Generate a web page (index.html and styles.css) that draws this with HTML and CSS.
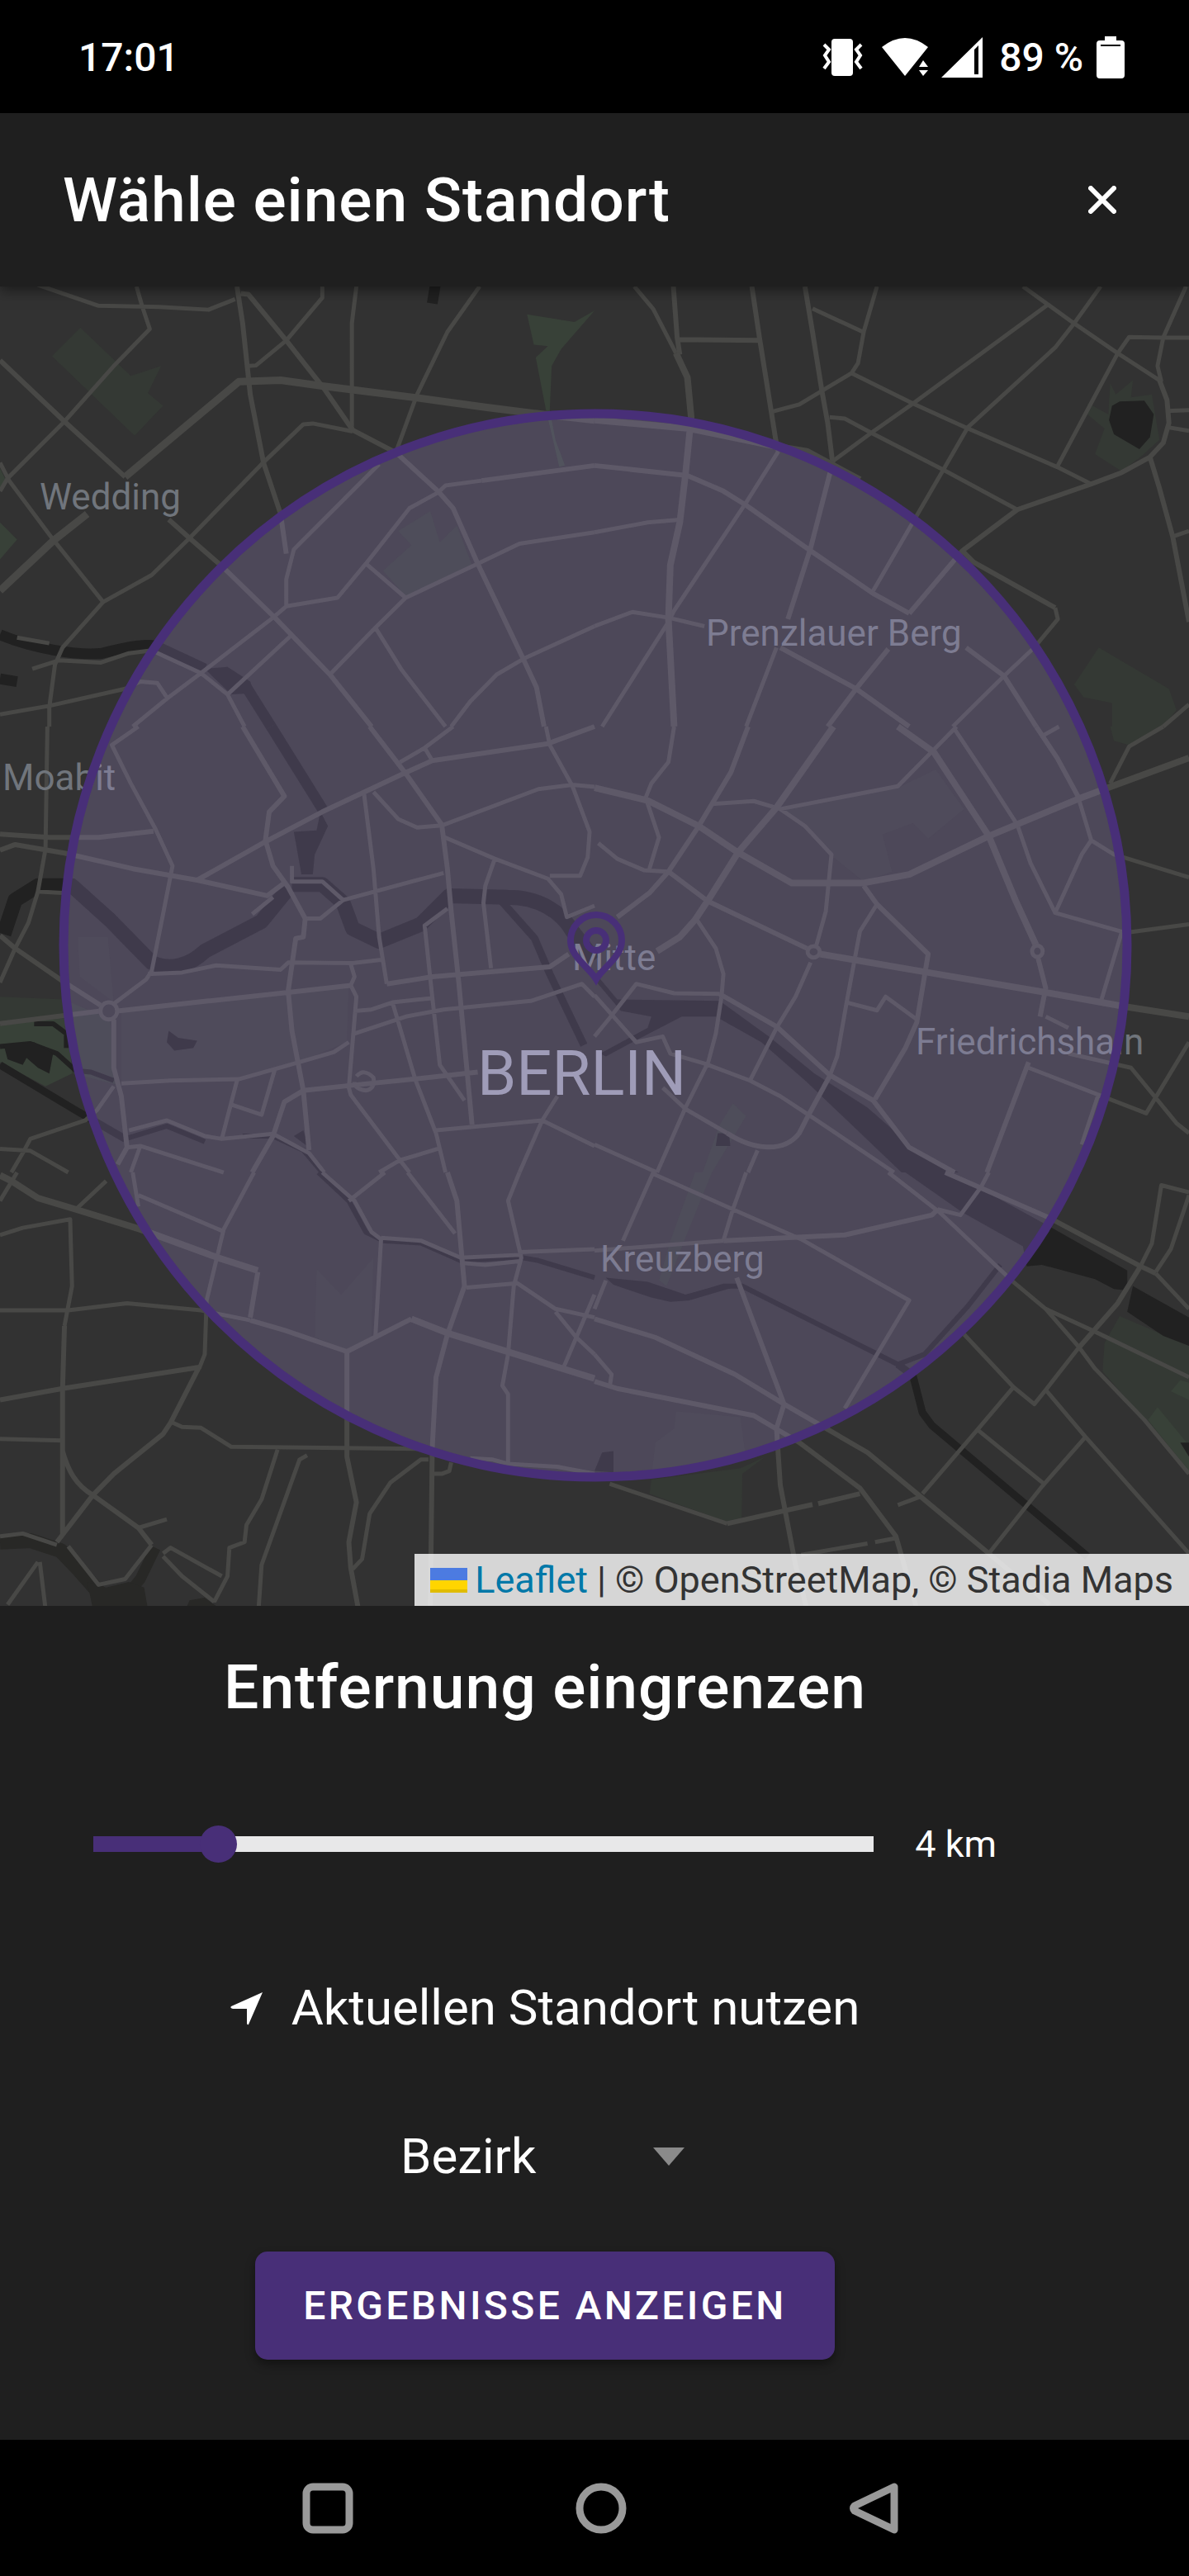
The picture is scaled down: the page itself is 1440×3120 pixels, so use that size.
FILE: index.html
```html
<!DOCTYPE html>
<html lang="de">
<head>
<meta charset="utf-8">
<meta name="viewport" content="width=device-width, initial-scale=1">
<title>Wähle einen Standort</title>
<link rel="stylesheet" href="styles.css">
</head>
<body>
<div class="status-bar">
  <time class="clock">17:01</time>
  <div class="status-icons">
    <svg class="vibrate" viewBox="0 0 50 46" width="50" height="46" aria-hidden="true"><rect x="11" width="26" height="45" rx="4" fill="#fff"/><path d="M2 7l6 6-5 7 5 8-6 8M47 7l-6 6 5 7-5 8 6 8" fill="none" stroke="#fff" stroke-width="4"/></svg>
    <svg class="wifi" viewBox="0 0 57 47" width="57" height="47" aria-hidden="true"><path d="M0 11Q28-11 56 11L28 46zM45 35l5-8 6 8zM45 39h11l-6 7z" fill="#fff"/></svg>
    <svg class="signal" viewBox="0 0 50 50" width="50" height="50" aria-hidden="true"><path fill-rule="evenodd" d="M0 49L50 0v49zM40 15v30h5V10z" fill="#fff"/></svg>
    <span class="charge">89 %</span>
    <svg class="battery" viewBox="0 0 34 51" width="34" height="51" aria-hidden="true"><path fill-rule="evenodd" d="M10 0h14v5h6a4 4 0 0 1 4 4v38a4 4 0 0 1-4 4H4a4 4 0 0 1-4-4V9a4 4 0 0 1 4-4h6zM5 10v2h24v-2z" fill="#fff"/></svg>
  </div>
</div>

<header class="title-bar">
  <h1 class="title">Wähle einen Standort</h1>
  <button class="close" type="button" aria-label="Schließen"><svg viewBox="0 0 34 34" width="34" height="34"><path d="M3 3l28 28M31 3L3 31" stroke="#fff" stroke-width="6" stroke-linecap="round"/></svg></button>
</header>

<main class="content">
<section class="map" aria-label="Karte">
<svg class="map-canvas" viewBox="0 347 1440 1598" preserveAspectRatio="xMidYMid slice">
<!-- one group per map tile: parks, water, roads -->
<g transform="translate(0 340) scale(.4592 .3444)">
  <path class="park" d="M212 165L345 335 425 300 390 395 430 440 355 545 137 265zM1135 810L1160 920 1205 860 1245 1000 1070 1110 1010 1020 1085 930 1050 880z"/>
  <path class="park-strong" d="M1390 118L1515 145 1568 105 1480 240 1455 300 1450 455 1465 560 1490 650 1475 655 1440 455 1413 270 1445 230 1408 225zM0 660L15 700 0 740zM0 850L45 910 0 980z"/>
  <path class="canal w12" d="M0 1245C80 1290 200 1320 270 1310 330 1290 400 1270 420 1290L540 1365M0 1400L45 1410M1148 15L1140 80M650 1430L715 1568"/>
  <path class="water" d="M540 1365L600 1358 660 1410 670 1450 610 1455z"/>
  <path class="road" d="M100 15L260 88 420 92 550 102 620 65M360 20L375 90 395 170 300 300 170 495 20 695 0 740M0 640L25 705 140 910 272 1130M850 20V60L755 210 675 298 655 300M940 20L928 150V530M1265 20L1180 180 1100 400 1045 600M272 1130L400 1035 500 905 690 645 800 505 825 502 930 530M272 1130L165 1290 145 1350 130 1500V1568M1000 645L775 945 755 1050V1145L720 1185 530 1380 440 1470 350 1568M755 1145L890 1115 965 995 1080 800 1155 745 1175 720 1270 703M965 995L1070 1115 1260 995 1370 925 1568 885M1070 1115L990 1220 870 1385M990 1220L1060 1370 1175 1568M770 1245L600 1455M1568 1215L1380 1330 1310 1385 1240 1480 1190 1568M85 1365L155 1335 265 1343 340 1310 400 1300 530 1380 600 1455 645 1568M0 1525L130 1495 330 1435 370 1410 415 1415 440 1465M45 1255L130 1275"/>
  <path class="road w6" d="M0 280L170 495 330 690M625 20L640 150 660 400 695 640 740 820 755 960M635 45L655 48 755 210 855 380 930 525 1045 605 1155 740 1195 800 1260 995 1380 1330 1415 1430 1435 1568M445 840L500 905 590 1010 725 1185 870 1385 980 1568M1270 703L1568 650"/>
  <path class="road w9" d="M0 1090L140 915 230 820M330 690L630 355 740 350 850 370 1100 412 1280 445 1400 465 1568 490"/>
</g>
<g transform="translate(720 340) scale(.4592 .3444)">
  <path class="park" d="M1300 430L1355 470 1360 360 1375 400 1420 350 1415 410 1470 400 1490 560 1440 620 1390 670 1320 610 1345 520 1300 470zM1330 1290L1515 1435 1535 1510 1500 1568H1365V1485L1290 1465 1265 1420z"/>
  <path class="water" d="M1365 440L1385 425 1450 422 1475 470 1465 550 1437 592 1370 540 1357 490z"/>
  <path class="road" d="M105 20L155 100 215 255M575 98L708 180M745 20L710 180 695 290 678 325 540 435 470 460M678 325L840 432 985 520 1220 655 1310 715M620 480L660 485 730 535 920 665 1115 805M1195 85L840 432 730 535 628 635M1130 20L1265 150 1380 255 1490 350M1335 20L1265 150 1215 235 985 515 920 665 835 860 735 1090M1560 20L1500 200 1485 300 1495 355M1568 200H1500L1410 198 1380 255 1220 655M1510 458L1568 455M1510 515L1568 528M1525 900L1568 880M1215 1150L1222 1190 1160 1290 1080 1390 945 1568M0 885L140 850 230 840M0 1215L100 1165 195 1185 290 1215M480 1290L400 1568M1568 1490L1500 1568M485 600L400 780 210 1160 195 1200 20 1568"/>
  <path class="road w6" d="M208 20L218 200 225 260M215 207L435 210M415 20L435 200 465 450 478 560 485 600M555 20L575 180 600 390 615 500 628 640 570 940 510 1190M1490 350L1510 420 1515 500 1500 570 1465 620 1390 675 1310 715 1115 805 970 950 830 1170M1465 620L1490 730 1525 900 1568 1200M970 950L1000 990 1215 1150M0 650L245 685 340 740 400 790 565 945 735 1100 830 1170M980 1290L1080 1390 1165 1568M490 1290L690 1435 830 1568M775 1295L690 1435 615 1568"/>
  <path class="road w8" d="M215 255L245 340 255 480 240 680 225 850 200 1000 195 1190 210 1568M0 490L250 520 470 580 560 600 700 700"/>
</g>
<g transform="translate(0 880) scale(.4592 .3444)">
  <path class="park" d="M0 950L170 960 290 1030 0 1045zM180 1025L290 1030 310 1260 190 1220z"/>
  <path class="park-strong" d="M0 1050L180 1025 190 1220 120 1265 0 1180z"/>
  <path class="lawn" d="M205 740L285 740 300 970 210 880zM320 1005L920 915 915 1110 790 1180 620 1240 320 1250z"/>
  <path class="canal w18" d="M10 730L40 610 100 560H190L290 680 400 830C450 860 500 840 540 790L690 685 760 570M770 555H850L905 620 930 710 1000 755 1110 695 1185 595 1340 600C1420 600 1480 650 1510 720L1568 820"/>
  <path class="canal w12" d="M715 0L855 300"/>
  <path class="canal w9" d="M1320 610L1410 745 1450 870 1540 1120M0 1190L200 1350 330 1450"/>
  <path class="canal w6" d="M330 1450L440 1405 540 1460M90 1045L140 1045 175 1080V1130M0 1125L80 1115 150 1150 200 1210 240 1215 300 1245M640 1440L720 1440 800 1490 850 1568"/>
  <path class="water" d="M845 300L865 350 830 450 825 520H795L775 370 835 365zM445 1070L470 1095 520 1105 510 1130 460 1140 440 1110zM10 1120L90 1110 140 1150 130 1220 100 1200 70 1165 60 1190 20 1170zM775 1440L800 1420 815 1480z"/>
  <path class="road" d="M125 0L120 430 100 580 75 690 40 780 0 900M365 0L295 65 345 200 410 360 455 490 430 660 400 860 385 890 300 975M95 580L165 585M1195 0L1120 75 1055 125M1120 75L1140 120M960 235L985 500 1000 740 1020 905M985 230L1050 325 1100 355 1165 348 1420 220 1510 205 1568 212M1440 0L1450 65 1510 210 1555 370 1550 460 1530 525H1450M1165 385L1305 465 1445 535 1480 590 1495 670 1568 630M1305 465L1280 560 1275 620 1295 850M665 660L720 600M770 490V545H850L905 610 1170 515M905 610L845 675H805M390 870L480 865 570 840 740 855 760 830 930 832 1005 820M925 835L935 880 925 910 940 950 920 1270 925 1295 1055 1525 1080 1568M1180 640L1120 700 1140 950 1160 1190 1225 1315M935 1000L980 995 1035 970 1140 955M935 1080L1070 1020 1170 995 1400 965 1535 905 1568 950M1035 970L1095 1240 1150 1430 1175 1568M320 1255L450 1245 630 1240 790 1180 880 1145 920 1110M300 1265L255 1350 225 1385 80 1450 60 1500 30 1568M0 1485L80 1492 130 1530 180 1568M625 1245L585 1450M725 1205L690 1365 612 1330M340 1420L440 1385 540 1440 585 1450 720 1432 815 1500 855 1568M370 1475L590 1568M335 1480L370 1475 345 1568M1470 1300L1430 1385 1370 1568M1150 1420L1430 1385 1568 1475M1155 1485L1055 1525 1000 1568M940 1230Q960 1200 985 1235 990 1275 965 1280 935 1275 935 1250"/>
  <path class="road w6" d="M0 378L130 390 260 390 405 368M0 435L40 415 170 445 350 500 520 540 705 595 755 545M0 735L40 780 165 895 265 980M640 0L750 245 710 300 700 400 720 490 760 565 805 675 800 740 780 745 760 930 770 1070 800 1280 815 1490M0 1045L265 1000M310 1000L550 965 760 935 925 910M975 0L1070 165 1165 345 1180 500 1190 650 1210 900 1245 1400M520 540L700 405 850 300 1065 165 1140 120 1445 60 1568 0M1020 905L1140 880 1450 845 1500 800M300 1030V1200L320 1300 335 1480 310 1540M665 1568L720 1440 750 1320 800 1280 925 1262 1090 1240 1260 1215"/>
  <ellipse class="road" cx="287" cy="1000" rx="22" ry="30"/>
</g>
<g transform="translate(720 880) scale(.4592 .3444)">
  <path class="park" d="M1360 0H1495L1410 65 1370 50zM365 1325L400 1370 310 1568H285L330 1400z"/>
  <path class="lawn" d="M500 290L800 215 900 150 975 290 880 395 840 340 760 380 785 510 710 545 630 460 620 430z"/>
  <path class="water" d="M10 880L60 960 330 965 460 1090 580 1220 720 1340 840 1480 960 1568H810L560 1250 440 1110 320 1020H230L100 1110 30 1160 15 1150 140 1060 150 1020 70 1000 0 890zM325 1430H355L358 1475H320z"/>
  <path class="road" d="M210 0L195 125 150 200 135 250 170 390 145 500M310 272L420 262 490 290 800 210 955 0M490 290L555 350 625 450 610 650 585 770M950 10L1035 180 1115 345 1150 480 1215 655 1400 725 1568 695M1275 245L1310 400 1370 450 1568 530M1185 30L1225 0M1310 400L1285 450 1215 655M1390 725L1335 970M10 410L60 465 130 505 195 510M745 625L700 720 665 970 640 1160 620 1230M665 970L745 998 768 950 850 1030M0 1090L40 1025 110 905 210 938 330 940M570 830L530 950 480 1060 410 1245M0 945L110 1110 180 1090 200 1150 290 1185 410 1245 490 1300 570 1370 790 1568M180 1270L240 1345 350 1430M430 1490L405 1568M0 1470L165 1568M1190 1020L1250 1060M1145 1200L1455 1360 1568 1110M1250 1150L1415 1200 1535 1395 1568 1430M1330 1290L1285 1470M1500 0L1410 70 1360 200M270 680L320 780 340 870 335 950 320 1080 300 1180 240 1340 165 1568"/>
  <path class="road w6" d="M405 0L360 160 275 350 195 510 145 585 60 670M1165 0L1220 110 1275 245M195 510L300 615 560 780M710 560L745 625 880 800 850 1040 820 1130 740 1310M620 1230L565 1365 540 1430C500 1500 420 1490 350 1430M330 940L480 1055 620 1225 735 1315 830 1480 950 1568M1170 815L1190 920 1175 1020M1145 1180L1035 1568"/>
  <path class="road w8" d="M630 0L480 285 380 440 300 610 265 680 225 740 165 790M0 215L140 260 275 350 375 440 520 550 710 550 830 520 1040 385 1275 255 1365 210 1568 110M800 0L895 90 1040 385 1110 610 1165 770M595 800L880 865 1190 935 1400 985 1568 1020"/>
  <ellipse class="road" cx="578" cy="792" rx="16" ry="20"/><ellipse class="road" cx="1168" cy="790" rx="14" ry="20"/>
</g>
<g transform="translate(0 1420) scale(.4592 .3444)">
  <path class="lawn" d="M835 340L900 430 985 300 980 580 915 625 830 580z"/>
  <path class="river w18" d="M0 1300L80 1295 160 1330 210 1400 270 1490"/>
  <path class="river w12" d="M410 1320L370 1430 320 1510"/>
  <path class="river-fill" d="M230 1440L280 1460 340 1440 380 1460 390 1535H245zM490 1535L500 1505 540 1495 580 1535z"/>
  <path class="canal w6" d="M840 0L920 100 965 210 1010 240 1110 248 1215 310 1370 298 1420 310 1568 370"/>
  <path class="road" d="M45 0L0 100M280 30L200 130M0 220L60 195 185 165 190 400 170 540M0 937L165 943M0 485H180L335 460 530 485 660 520M670 0L590 200 545 450 540 640 525 690M365 80L585 205M350 0L365 120M365 1250L440 1220M455 880L480 895 530 898 610 965 1100 972M732 975L690 1150 650 1240 645 1300 605 1320 600 1420 565 1510M810 995L790 1010 690 1380 682 1535M1130 1010H1110L1030 1090 975 1200 955 1360 930 1395M1190 1020L1185 1050 1165 1060H1140M920 100L1015 0M850 0L935 100 980 210 1005 235 990 580M1005 230L1110 240 1215 300 1370 290M1215 318L1280 325 1370 312M1075 0L1200 215M1370 0L1340 100 1375 300 1355 400 1340 640 1325 750 1340 780V1020M1230 405L1365 390 1465 480 1568 510M1370 280L1568 270M1465 490L1520 580 1568 640M1568 430L1520 580 1485 690M1240 1005L1300 1010 1340 1025 1470 1035 1568 1060M100 1370L20 1520M105 1370L120 1535M430 1350L480 1420 565 1510M430 1340L450 1320 585 1420M0 1280L60 1270 150 1310M180 1315L260 1450 330 1430 400 1310"/>
  <path class="road w6" d="M170 540L165 760V1270M0 800L165 760 525 685 450 880 430 920 300 1060 245 1135 150 1300M165 980C180 1050 200 1100 245 1135L365 1250 400 1310M915 630V1000L940 1160 920 1300 925 1390 945 1535M1180 0L1205 100 1225 400 1180 570 1150 720 1140 970 1135 1535M660 520L750 555 915 630 1085 515M680 350L660 510"/>
  <path class="road w8" d="M0 10L30 30 100 90 200 130 370 200 575 300 680 345M1085 515L1180 565 1568 725"/>
</g>
<g transform="translate(720 1420) scale(.4592 .3444)">
  <path class="park" d="M1385 505L1568 610V1050L1340 700 1345 600zM150 1080L385 1040 450 1000 390 1060 388 1220 350 1230 145 1130zM265 0H310L240 230 190 400 170 380 200 240z"/>
  <path class="park-strong" d="M1485 825L1568 960V1050L1460 870zM1545 730L1568 740V800L1520 770z"/>
  <path class="lawn" d="M215 840L385 860 400 1010 150 1070 160 950 210 900z"/>
  <path class="water" d="M820 0H940L1200 190 1405 345V415L1370 410 1320 375 1180 325 1140 330 1130 260 970 140zM1420 400L1568 510V610L1500 575 1405 490zM30 370L140 385 240 430 340 395 390 395 250 450 200 455 150 440 50 395zM0 1050L20 985 50 980V1055zM1545 950H1568V1000z"/>
  <path class="canal w6" d="M240 440L340 400H390L800 675 870 640 985 470 1070 325"/>
  <path class="canal w9" d="M800 675L840 715 865 845 890 890 1300 1350"/>
  <path class="road" d="M155 0L75 240M155 5L365 130 545 235 830 450 660 830M400 0L365 130 340 240M0 275L340 240M905 130L965 150 1020 50 1040 0M1568 80L1520 270 1480 350M1568 70L1495 45 1470 250 1440 330M1275 620L1190 765 1160 815 1105 755 975 570M775 0L910 140 1100 380 1190 480 1320 560 1568 720M1190 480L1275 610 1320 690 1450 870 1568 1060M1190 765L1295 930 1568 1340M1295 930L1180 1105 1040 1340M1105 755L1010 905 865 1130M1010 905L1190 1100M0 640L45 710 40 755M30 380L0 480M40 1095L350 1235M545 1345L720 1305M740 1300L800 1285M800 1170L860 1140M1480 355L1568 480"/>
  <path class="road w6" d="M340 240L660 220 890 150 905 130M925 0L1200 160 1440 330 1480 355M1440 330L1380 460 1275 620M0 515L160 580 370 710 500 815 720 985 860 1140 1040 1340 1200 1520M375 370L500 815 480 900 490 1100 530 1380 560 1535M0 735L60 760 420 855 540 950 700 1110 795 1280 850 1535M350 1235L500 1190 575 1168M590 1165L700 1130"/>
</g>
<text class="place" x="48" y="617">Wedding</text>
<text class="place" x="3" y="957">Moabit</text>
<text class="place" x="855" y="782">Prenzlauer Berg</text>
<text class="place" x="693" y="1175">Mitte</text>
<text class="place" x="1109" y="1277">Friedrichshain</text>
<text class="place" x="727" y="1540">Kreuzberg</text>
<text class="city" x="578" y="1326">BERLIN</text>
<circle class="radius" cx="721" cy="1145" r="644"/>
<g class="pin"><path d="M722 1186C713 1171 691 1159 691 1139a31 31 0 0 1 62 0C753 1159 731 1171 722 1186z"/><circle cx="722" cy="1139" r="12"/></g>
</svg>
<div class="attribution">
  <a class="leaflet" href="#"><svg viewBox="0 0 45 30" width="45" height="30" aria-hidden="true"><path fill="#4c7be1" d="M0 0h45v15H0z"/><path fill="#ffd500" d="M0 15h45v11H0z"/><path fill="#e0bc00" d="M0 26h45v4H0z"/></svg>Leaflet</a>
  <span>| © OpenStreetMap, © Stadia Maps</span>
</div>
</section>

<form class="panel">
  <h2 class="title"><label for="distance">Entfernung eingrenzen</label></h2>
  <div class="distance-row">
    <input class="distance" id="distance" type="range" min="1" max="22" value="4">
    <output class="distance-value" for="distance">4 km</output>
  </div>
  <button class="locate" type="button"><svg viewBox="0 0 40 41" width="40" height="41" aria-hidden="true"><path d="M39 1L22 40q-2 1-2-2V21H3q-4-1-2-3z" fill="#fff"/></svg>Aktuellen Standort nutzen</button>
  <div class="district">
    <select class="district-select" aria-label="Bezirk"><option>Bezirk</option></select>
    <svg class="arrow" viewBox="0 0 38 22" width="38" height="22" aria-hidden="true"><path d="M0 0h38L19 22z" fill="#8a8a8a"/></svg>
  </div>
  <button class="submit" type="button">ERGEBNISSE ANZEIGEN</button>
</form>
</main>

<nav class="system-nav" aria-label="System">
  <button type="button" aria-label="Übersicht"><svg viewBox="0 0 62 62" width="62" height="62"><rect x="5" y="5" width="52" height="52" rx="8"/></svg></button>
  <button type="button" aria-label="Startseite"><svg viewBox="0 0 62 62" width="62" height="62"><circle cx="31" cy="31" r="26"/></svg></button>
  <button type="button" aria-label="Zurück"><svg viewBox="0 0 62 62" width="62" height="62"><path d="M55 5v52L7 34q-3-3 0-6z"/></svg></button>
</nav>
</body>
</html>
```
FILE: styles.css
```css
* {
  box-sizing: border-box;
}

body {
  display: flex;
  flex-direction: column;
  min-height: 100vh;
  margin: 0;
  background: #1f1f1f;
  color: #fff;
  font-family: Roboto, "Liberation Sans", sans-serif;
}

button,
select {
  margin: 0;
  padding: 0;
  border: 0;
  background: none;
  color: inherit;
  font: inherit;
  cursor: pointer;
}

svg {
  display: block;
}

/* Status bar */
.status-bar {
  display: flex;
  align-items: center;
  justify-content: space-between;
  height: 137px;
  padding: 2px 78px 0 95px;
  background: #000;
  font-size: 48px;
  font-weight: 500;
}

.status-icons {
  display: flex;
  align-items: center;
}

.wifi {
  margin-left: 22px;
}

.signal {
  margin-left: 15px;
}

.charge {
  margin: 0 16px 0 20px;
}

/* Title bar */
.title-bar {
  position: relative;
  z-index: 1;
  display: flex;
  align-items: center;
  justify-content: space-between;
  height: 210px;
  padding: 0 88px 0 76px;
  background: #1f1f1f;
  box-shadow: 0 4px 16px rgba(0, 0, 0, .5);
}

.title {
  margin: 0;
  font-size: 75px;
  font-weight: 500;
  line-height: 96px;
  letter-spacing: .0125em;
}

.content {
  display: flex;
  flex: 1;
  flex-direction: column;
}

/* Map */
.map {
  position: relative;
  flex: 1;
  min-height: 600px;
  overflow: hidden;
  background: #323232;
}

.map-canvas {
  position: absolute;
  inset: 0;
  width: 100%;
  height: 100%;
}

.park {
  fill: #343934;
}

.park-strong {
  fill: #384138;
}

.lawn {
  fill: #353635;
}

.water {
  fill: #212121;
}

.river-fill {
  fill: #282826;
}

.road,
.canal,
.river {
  fill: none;
  stroke: #484846;
  stroke-width: 5px;
  stroke-linejoin: round;
  vector-effect: non-scaling-stroke;
}

.canal {
  stroke: #212121;
}

.river {
  stroke: #282826;
}

.w6 {
  stroke-width: 6px;
}

.w8 {
  stroke-width: 8px;
}

.w9 {
  stroke-width: 9px;
}

.w12 {
  stroke-width: 13px;
}

.w18 {
  stroke-width: 18px;
}

.place {
  fill: #70757c;
  font-size: 44px;
}

.city {
  fill: #9c9eac;
  font-size: 76px;
}

.radius {
  fill: rgba(173, 150, 227, .22);
  stroke: #482f78;
  stroke-width: 11px;
}

.pin {
  fill: none;
  stroke: #482f78;
  stroke-width: 8px;
}

.attribution {
  position: absolute;
  right: 0;
  bottom: 0;
  display: flex;
  gap: 11px;
  padding: 0 19px;
  background: rgba(255, 255, 255, .8);
  color: #333;
  font-size: 45px;
  line-height: 63px;
}

.leaflet {
  display: flex;
  align-items: center;
  gap: 9px;
  color: #0078a8;
  text-decoration: none;
}

/* Filter panel */
.panel {
  display: flex;
  flex-direction: column;
  align-items: center;
  padding: 50px 120px 97px 0;
}

.distance-row {
  display: flex;
  align-items: center;
  align-self: stretch;
  gap: 50px;
  height: 48px;
  margin: 118px 0 139px;
  padding: 0 113px;
}

.distance {
  flex: 1;
  height: 19px;
  margin: 0;
  appearance: none;
  background: linear-gradient(90deg, #482f78 16%, #e8e8e9 16%);
}

.distance::-webkit-slider-thumb {
  width: 45px;
  height: 45px;
  border-radius: 50%;
  appearance: none;
  background: #482f78;
}

.distance-value {
  font-size: 45px;
}

.locate {
  display: flex;
  align-items: center;
  gap: 34px;
  font-size: 60px;
  line-height: 72px;
}

.district {
  display: grid;
  align-items: center;
  width: 350px;
  margin: 108px 0 79px;
}

.district-select {
  grid-area: 1 / 1;
  height: 72px;
  appearance: none;
  font-size: 60px;
  line-height: 72px;
}

.arrow {
  grid-area: 1 / 1;
  justify-self: end;
  margin-right: 6px;
  pointer-events: none;
}

.submit {
  height: 131px;
  padding: 0 58px;
  border-radius: 15px;
  background: #482f78;
  box-shadow: 0 6px 12px rgba(0, 0, 0, .4);
  font-size: 48px;
  font-weight: 500;
  letter-spacing: .07em;
}

/* System navigation */
.system-nav {
  display: flex;
  align-items: center;
  justify-content: center;
  gap: 269px;
  height: 165px;
  padding: 0 0 0 16px;
  background: #000;
}

.system-nav svg {
  fill: none;
  stroke: #999;
  stroke-width: 9px;
  stroke-linejoin: round;
}
```
